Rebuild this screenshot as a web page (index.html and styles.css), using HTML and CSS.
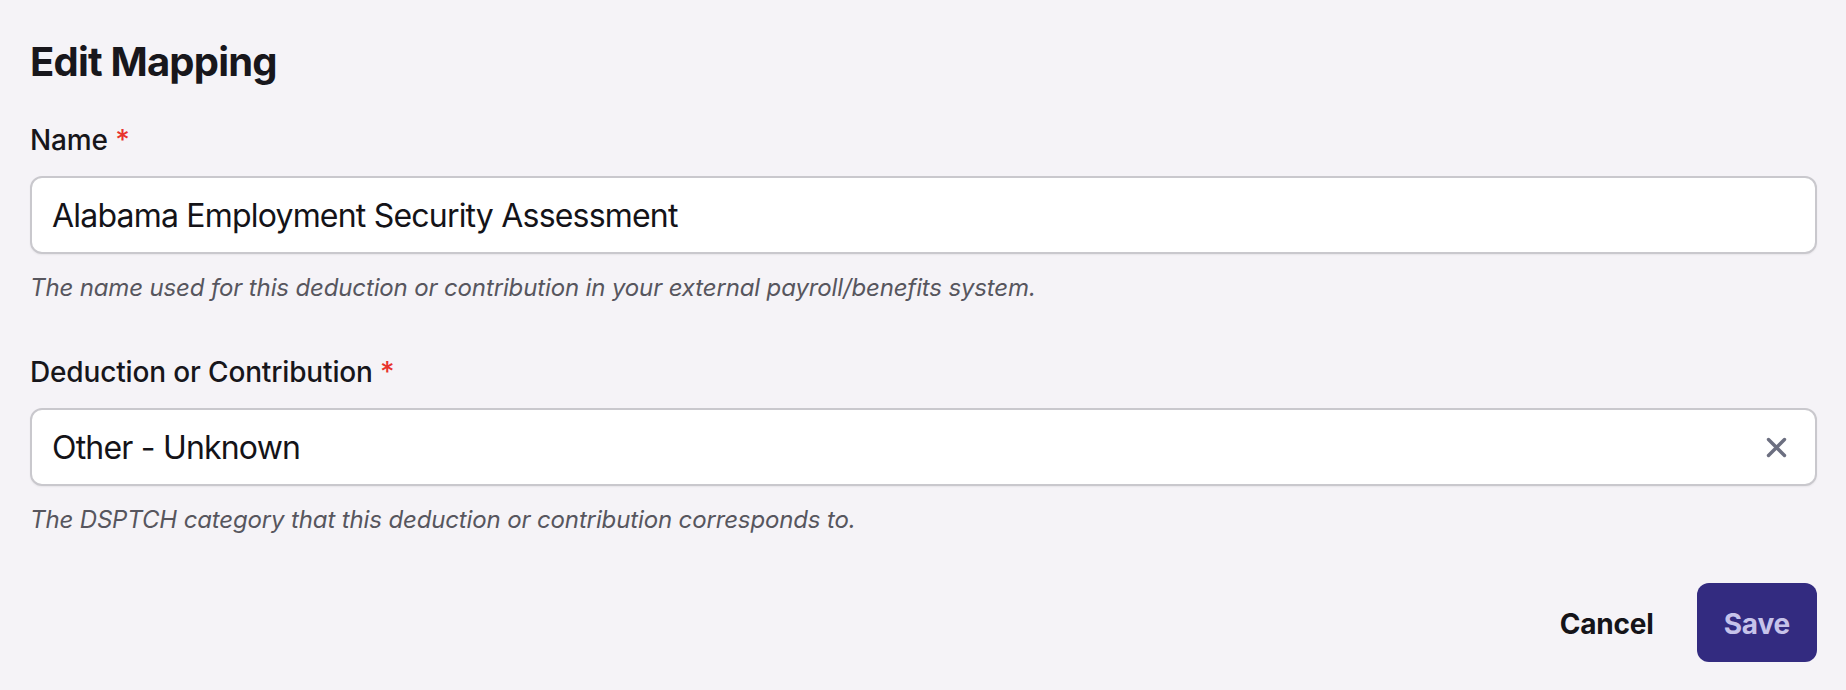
FILE: index.html
```html
<!DOCTYPE html>
<html lang="en">
<head>
<meta charset="utf-8">
<title>Edit Mapping</title>
<link rel="stylesheet" href="styles.css">
</head>
<body>
<main class="page">
  <h1 class="title">Edit Mapping</h1>
  <form class="form">
    <div class="field">
      <label class="label">Name <span class="req">*</span></label>
      <div class="input">
        <span class="value">Alabama Employment Security Assessment</span>
      </div>
      <p class="help">The name used for this deduction or contribution in your external payroll/benefits system.</p>
    </div>
    <div class="field">
      <label class="label">Deduction or Contribution <span class="req">*</span></label>
      <div class="input">
        <span class="value">Other - Unknown</span>
        <svg class="clear" width="21" height="21" viewBox="0 0 21 21" aria-hidden="true">
          <path d="M2.5 2.5 L18.5 18.5 M18.5 2.5 L2.5 18.5" stroke="#6c6f80" stroke-width="3.4" stroke-linecap="round" fill="none"/>
        </svg>
      </div>
      <p class="help">The DSPTCH category that this deduction or contribution corresponds to.</p>
    </div>
    <div class="actions">
      <button type="button" class="btn btn-cancel">Cancel</button>
      <button type="button" class="btn btn-save">Save</button>
    </div>
  </form>
</main>
</body>
</html>
```

FILE: styles.css
```css
* { box-sizing: border-box; }
html, body {
  margin: 0;
  background: #f5f3f7;
}
body {
  font-family: Inter, "Noto Sans", "Liberation Sans", sans-serif;
  color: #151419;
}
.page {
  padding: 38px 29px 0 30px;
}
.title {
  margin: 0;
  font-size: 40px;
  line-height: 48px;
  font-weight: 700;
  letter-spacing: -0.8px;
  color: #18171c;
}
.form {
  margin-top: 37px;
  display: flex;
  flex-direction: column;
}
.field {
  display: flex;
  flex-direction: column;
}
.field + .field {
  margin-top: 51px;
}
.label {
  font-size: 28px;
  line-height: 34px;
  font-weight: 500;
  letter-spacing: -0.15px;
  color: #17161b;
  margin-bottom: 19px;
}
.req {
  color: #e8332c;
}
.input {
  display: flex;
  align-items: center;
  background: #ffffff;
  border: 2px solid #c9c8cd;
  border-radius: 12px;
  padding: 18px 28px 16px 20px;
  box-shadow: 0 1px 2px rgba(0, 0, 0, 0.06);
}
.value {
  flex: 1;
  font-size: 32px;
  line-height: 40px;
  letter-spacing: -0.8px;
  color: #141318;
}
.clear {
  flex: none;
  margin-top: -2px;
}
.help {
  margin: 18px 0 0;
  font-size: 24px;
  line-height: 32px;
  font-style: italic;
  letter-spacing: -0.14px;
  color: #57565e;
}
.actions {
  margin-top: 47px;
  display: flex;
  justify-content: flex-end;
  gap: 16px;
}
.btn {
  font-family: inherit;
  font-size: 28px;
  line-height: 34px;
  font-weight: 700;
  letter-spacing: -0.2px;
  border: none;
  border-radius: 12px;
  padding: 24px 27px 21px;
  cursor: pointer;
}
.btn-cancel {
  background: transparent;
  color: #151419;
}
.btn-save {
  background: #332b80;
  color: #c6c3ea;
}
```
